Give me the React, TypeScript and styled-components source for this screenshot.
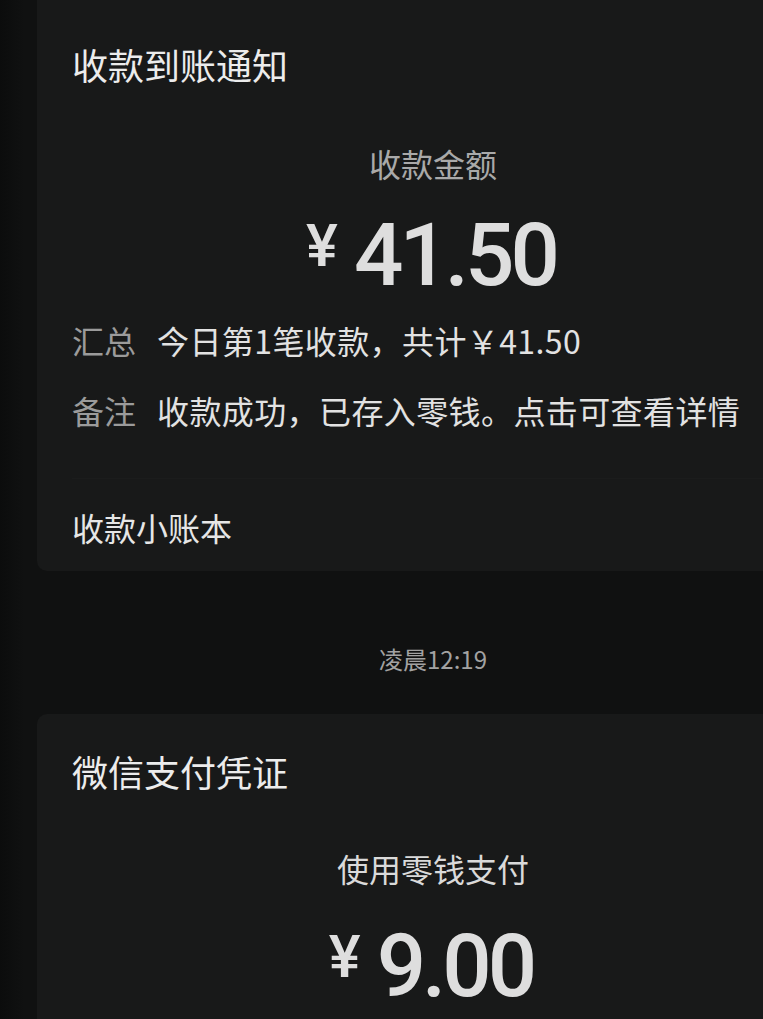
import React from "react";
import styled, { createGlobalStyle } from "styled-components";

const GlobalStyle = createGlobalStyle`
  html, body {
    margin: 0;
    padding: 0;
    background: #101111;
    overflow: hidden;
  }
  body {
    font-family: "Noto Sans CJK SC", "Noto Sans", sans-serif;
    color: #e6e6e6;
  }
`;

const Page = styled.div`
  display: flex;
  flex-direction: column;
  height: 1019px;
  overflow: hidden;
  background: linear-gradient(90deg, #0b0c0c 0, #101111 24px);
`;

const Card = styled.section<{ $first?: boolean }>`
  margin-left: 37px;
  width: 792px;
  flex-shrink: 0;
  box-sizing: border-box;
  margin-top: ${(p) => (p.$first ? "-20px" : "0")};
  padding-top: ${(p) => (p.$first ? "66px" : "39px")};
  padding-bottom: ${(p) => (p.$first ? "0" : "60px")};
  padding-left: 35px;
  background: #181919;
  border-radius: 10px;
  display: flex;
  flex-direction: column;
`;

const CardTitle = styled.h2`
  margin: 0;
  font-size: 36px;
  line-height: 36px;
  font-weight: 400;
  color: #ececec;
`;

const Center = styled.div`
  width: 792px;
  margin-left: -35px;
  display: flex;
  flex-direction: column;
  align-items: center;
`;

const AmountLabel = styled.div<{ $bright?: boolean }>`
  margin-top: ${(p) => (p.$bright ? "59px" : "61px")};
  font-size: 32px;
  line-height: 40px;
  color: ${(p) => (p.$bright ? "#dadada" : "#a9a9a9")};
`;

const Amount = styled.div<{ $gap?: number }>`
  margin-top: ${(p) => p.$gap ?? 28}px;
  display: flex;
  align-items: flex-start;
  font-family: Roboto, "Liberation Sans", sans-serif;
  font-weight: 500;
  color: #dedede;
  height: 88px;
  padding-right: 4px;
`;

const Yen = styled.span`
  font-size: 60px;
  line-height: 60px;
  margin-top: 5px;
  margin-right: 16px;
`;

const Digits = styled.span`
  font-size: 87px;
  line-height: 88px;
  letter-spacing: -4px;
`;

const Rows = styled.div`
  margin-top: 21px;
  display: flex;
  flex-direction: column;
  gap: 30px;
`;

const Row = styled.div`
  display: flex;
  gap: 21px;
  font-size: 32px;
  line-height: 40px;
  white-space: nowrap;
`;

const RowLabel = styled.span`
  color: #9b9b9b;
`;

const RowValue = styled.span`
  color: #e2e2e2;
  letter-spacing: 0.4px;
`;

const Footer = styled.div`
  margin-top: 48px;
  padding: 28px 0 24px;
  border-top: 1px solid #1b1c1c;
  font-size: 32px;
  line-height: 40px;
  color: #e6e6e6;
`;

const Time = styled.div`
  margin: 73px 0 40px 37px;
  width: 792px;
  flex-shrink: 0;
  text-align: center;
  font-size: 24px;
  line-height: 30px;
  color: #a2a2a2;
`;

const MoneyLine = ({ value, gap }: { value: string; gap?: number }) => (
  <Amount $gap={gap}>
    <Yen>¥</Yen>
    <Digits>{value}</Digits>
  </Amount>
);

export default function App() {
  return (
    <>
      <GlobalStyle />
      <Page>
        <Card $first>
          <CardTitle>收款到账通知</CardTitle>
          <Center>
            <AmountLabel>收款金额</AmountLabel>
            <MoneyLine value="41.50" />
          </Center>
          <Rows>
            <Row>
              <RowLabel>汇总</RowLabel>
              <RowValue>今日第1笔收款，共计￥41.50</RowValue>
            </Row>
            <Row>
              <RowLabel>备注</RowLabel>
              <RowValue>收款成功，已存入零钱。点击可查看详情</RowValue>
            </Row>
          </Rows>
          <Footer>收款小账本</Footer>
        </Card>

        <Time>凌晨12:19</Time>

        <Card>
          <CardTitle>微信支付凭证</CardTitle>
          <Center>
            <AmountLabel $bright>使用零钱支付</AmountLabel>
            <MoneyLine value="9.00" gap={34} />
          </Center>
        </Card>
      </Page>
    </>
  );
}
